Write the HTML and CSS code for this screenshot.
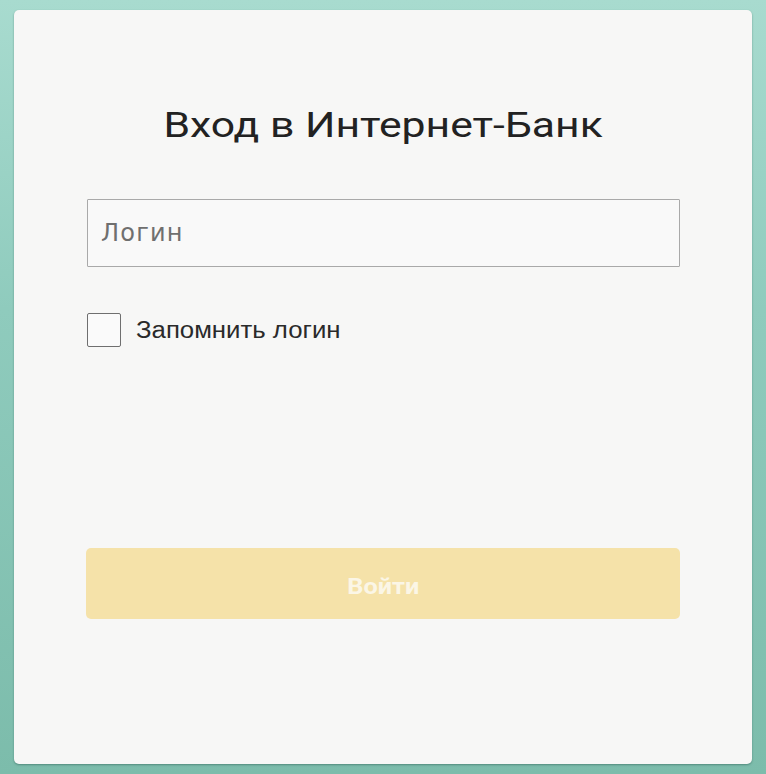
FILE: index.html
```html
<!DOCTYPE html>
<html lang="ru">
<head>
<meta charset="utf-8">
<title>Вход в Интернет-Банк</title>
<link rel="stylesheet" href="styles.css">
</head>
<body>
  <main class="card">
    <h1 class="title"><span class="title-text">Вход в Интернет-Банк</span></h1>
    <form class="form">
      <input class="field" type="text" placeholder="Логин">
      <label class="remember">
        <span class="box"></span>
        <span class="remember-text">Запомнить логин</span>
      </label>
      <button class="submit" type="button" disabled><span class="submit-text">Войти</span></button>
    </form>
  </main>
</body>
</html>
```
FILE: styles.css
```css
* { box-sizing: border-box; }

html, body {
  margin: 0;
  height: 100%;
}

body {
  background: linear-gradient(180deg, #a8dbcf 0%, #8fcbbd 40%, #7cbcab 100%);
  padding: 10px 14px;
  font-family: "Liberation Sans", Arial, sans-serif;
}

.card {
  width: 738px;
  height: 754px;
  background: #f7f7f6;
  border-radius: 5px;
  box-shadow: 0 1px 2px rgba(40, 90, 80, 0.5);
  padding: 0 72px 0 73px;
}

.title {
  margin: 0;
  padding-top: 90px;
  text-align: center;
  font-family: Roboto, "Noto Sans", sans-serif;
  font-weight: 400;
  font-size: 35px;
  line-height: 52px;
  color: #222;
}

/* the heading face is set wide */
.title-text {
  display: inline-block;
  transform: scaleX(1.22);
  transform-origin: center;
}

.form {
  display: flex;
  flex-direction: column;
  margin-top: 47px;
}

.field {
  height: 68px;
  border: 1px solid #a9a9a9;
  background: #f9f9f9;
  padding: 0 14px 0 13px;
  font-family: "DejaVu Sans", sans-serif;
  font-size: 24px;
  letter-spacing: 1.2px;
  color: #333;
  border-radius: 1px;
}

.field::placeholder { color: #6f6f6f; }

.remember {
  display: flex;
  align-items: center;
  gap: 15px;
  margin-top: 46px;
}

.box {
  width: 34px;
  height: 34px;
  border: 1px solid #6f6f6f;
  border-radius: 2px;
  background: #fafafa;
  flex-shrink: 0;
}

.remember-text {
  display: inline-block;
  font-size: 23px;
  color: #2a2a2a;
  transform: scaleX(1.12);
  transform-origin: left center;
}

.submit {
  margin-top: 201px;
  margin-left: -1px;
  height: 71px;
  padding-top: 7px;
  border: none;
  border-radius: 5px;
  background: #f5e2a9;
  color: #fbf6e6;
  font-family: Roboto, "Noto Sans", sans-serif;
  font-size: 22px;
  font-weight: 700;
}

.submit-text {
  display: inline-block;
  transform: scaleX(1.15);
}
```
